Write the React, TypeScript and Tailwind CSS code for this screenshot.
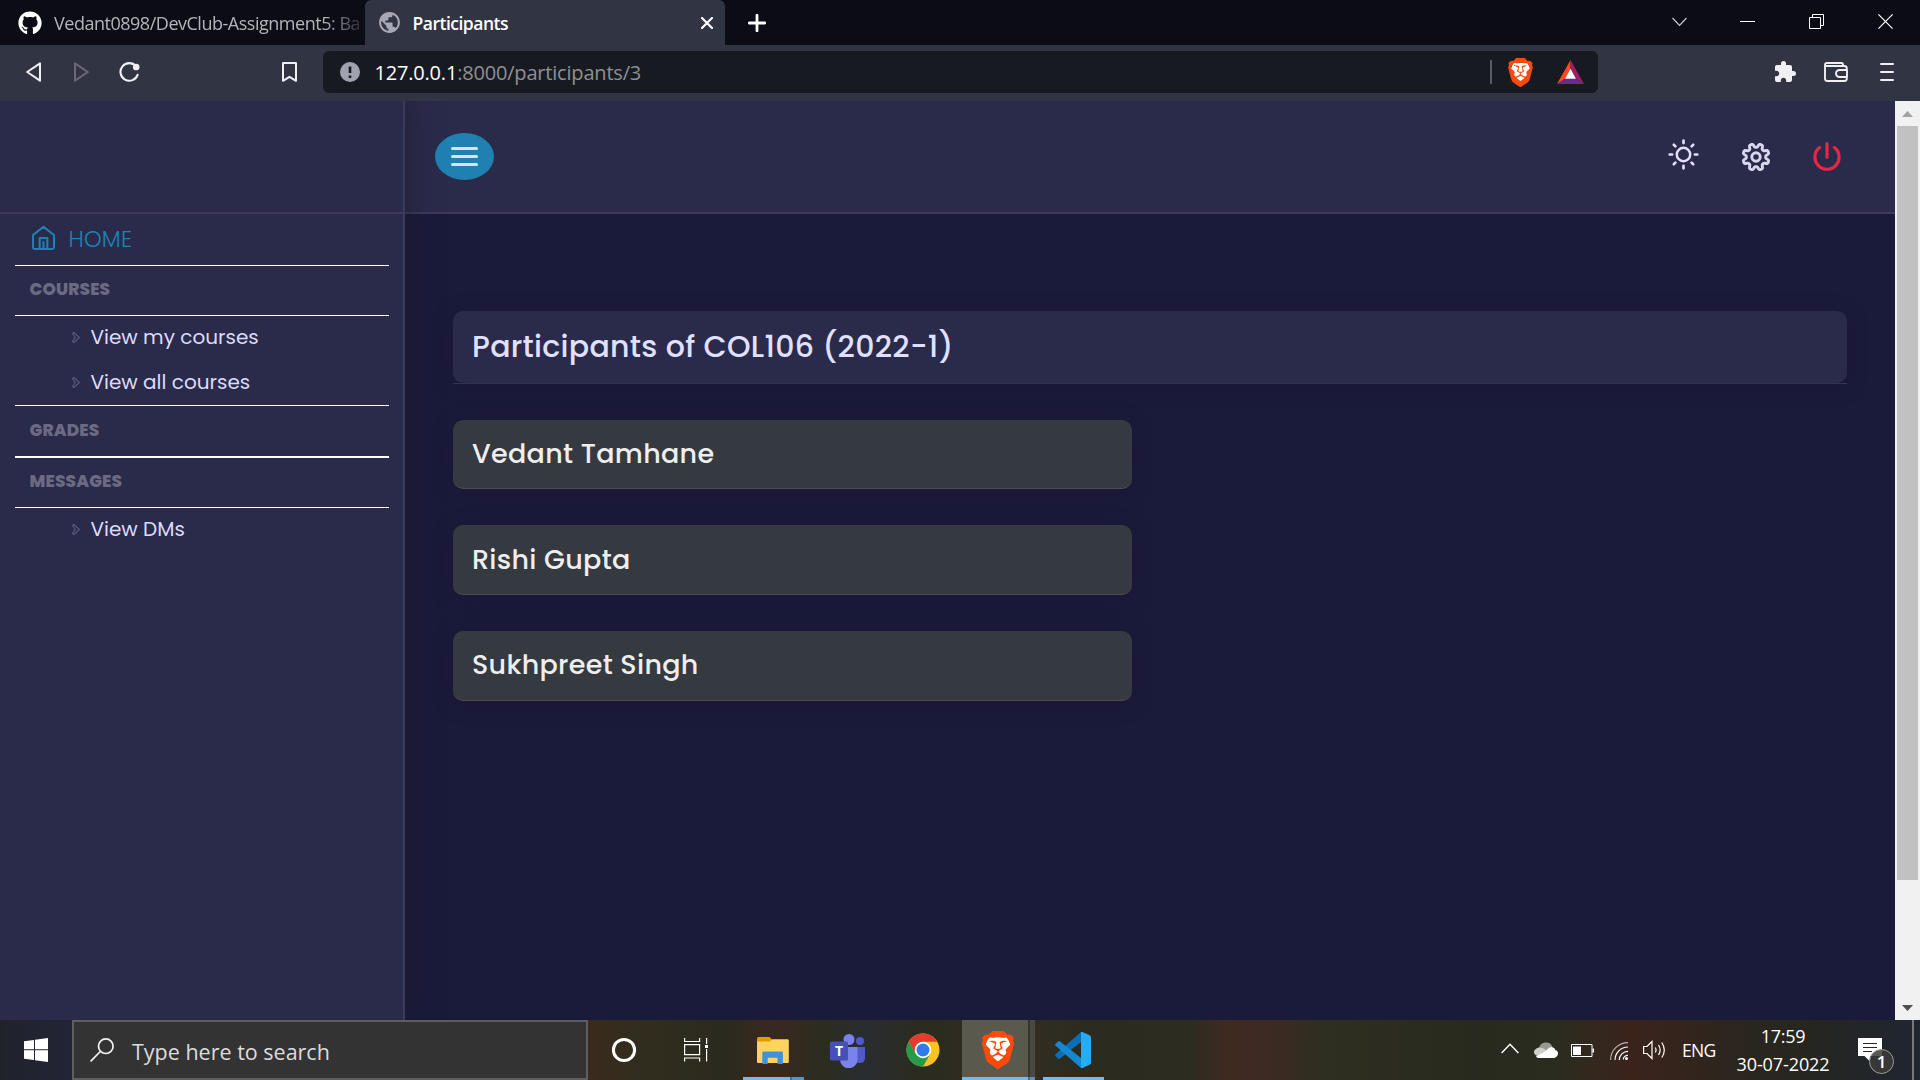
import React from "react";
import { FaGithub } from "react-icons/fa";
import { SiBrave } from "react-icons/si";
import { MdExtension, MdPublic } from "react-icons/md";

const poppins = "font-['Poppins',Inter,sans-serif]";
const segoe = "font-['Open_Sans','Noto_Sans',sans-serif]";

function Lion({ className }: { className: string }) {
  return (
    <svg viewBox="0 0 24 24" className={className} preserveAspectRatio="none">
      <path d="M6 4h12l2 5-3 8-5 5-5-5-3-8z" fill="#fff" />
      <SiBrave width="24" height="24" size={24} color="#fb4a0b" />
    </svg>
  );
}

function TabStrip() {
  return (
    <div className="flex h-[45px] bg-[#0b0c15]">
      <div className="flex w-[365px] items-center pl-[18px]">
        <FaGithub className="size-6 shrink-0 text-white" />
        <div className="ml-3 whitespace-nowrap text-[18px] leading-6 tracking-[-0.48px] text-[#b5b5b8] [mask-image:linear-gradient(90deg,#000_88%,transparent_103%)]">
          Vedant0898/DevClub-Assignment5: Ba
        </div>
      </div>
      <div className="flex w-[360px] items-center rounded-t-[6px] bg-[#313442] pl-[12px] pr-[12px]">
        <MdPublic className="size-[25px] text-[#a6a8b3]" />
        <span className="ml-[10.5px] text-[17.5px] leading-6 font-semibold tracking-[-0.5px] text-white">Participants</span>
        <svg viewBox="0 0 12 12" className="ml-auto size-3" stroke="#fff" strokeWidth="2.2" strokeLinecap="round">
          <path d="M1 1l10 10M11 1L1 11" />
        </svg>
      </div>
      <svg viewBox="0 0 18 18" className="mt-[13.5px] ml-[23px] size-[18px]" stroke="#fff" strokeWidth="2.8" strokeLinecap="round">
        <path d="M9 1.2v15.6M1.2 9h15.6" />
      </svg>
      <div className="ml-auto flex items-center pr-[27px] pb-[2px]">
        <svg viewBox="0 0 15 10" className="mr-[53px] h-[10px] w-[15px]" fill="none" stroke="#d0d0d4" strokeWidth="1.1">
          <path d="M.5 1l7 7.5 7-7.5" />
        </svg>
        <div className="mr-[54px] h-px w-[15px] bg-white" />
        <svg viewBox="0 0 15 15" className="mr-[54px] size-[15px]" fill="none" stroke="#fff">
          <path d="M.5 3.5h11v11H.5zM3.5 3.5v-3h11v11h-3" />
        </svg>
        <svg viewBox="0 0 15 15" className="size-[15px]" stroke="#fff" strokeWidth="1.2">
          <path d="M.4.4l14.2 14.2M14.6.4L.4 14.6" />
        </svg>
      </div>
    </div>
  );
}

function Toolbar() {
  return (
    <div className="flex h-14 bg-[#313442] pb-[2px]">
      <div className="flex w-[323px] items-center pl-[26px]">
        <svg viewBox="0 0 15 20" className="h-5 w-[15px]" fill="none" stroke="#f0f0f2" strokeWidth="2" strokeLinejoin="round">
          <path d="M14 1.3v17.4L1.2 10z" />
        </svg>
        <svg viewBox="0 0 15 20" className="ml-[33px] h-5 w-[15px]" fill="none" stroke="#676a76" strokeWidth="2" strokeLinejoin="round">
          <path d="M1 1.3v17.4L13.8 10z" />
        </svg>
        <svg viewBox="0 0 21 20" className="ml-[30px] h-5 w-[21px]" fill="none" stroke="#f0f0f2" strokeWidth="2.1" strokeLinecap="round">
          <path d="M17 4.2A8.8 8.8 0 1 0 18.6 12.8" />
          <circle cx="17.2" cy="5" r="2.3" fill="#f0f0f2" />
        </svg>
        <svg viewBox="0 0 15 20" className="ml-[142px] h-5 w-[15px]" fill="none" stroke="#f0f0f2" strokeWidth="2" strokeLinejoin="round">
          <path d="M1 1h13v17.8l-6.500-4-6.500 4z" />
        </svg>
      </div>
      <div className="mt-[6px] flex h-[42px] w-[1275px] items-center rounded-[6px] bg-[#181a21] pl-[17px]">
        <svg viewBox="0 0 20 20" className="size-5">
          <circle cx="10" cy="10" r="10" fill="#a0a3ae" />
          <path d="M10 4.500v6.500M10 13.600v2.400" stroke="#181a21" strokeWidth="2.600" />
        </svg>
        <div className="ml-[14.5px] pt-px text-[20px] leading-7 tracking-[-0.19px] text-[#8f9092]">
          <span className="text-white">127.0.0.1</span>:8000/participants/3
        </div>
        <div className="ml-auto h-6 w-[2px] bg-[#5b5d64]" />
        <Lion className="ml-[13.500px] size-[29px]" />
        <svg viewBox="0 0 27 24" className="mr-[14px] ml-[22.500px] h-6 w-[27px]">
          <path d="M13.500 0v9.500L8.500 18.500 0 24z" fill="#ff4724" />
          <path d="M13.500 0L27 24l-8.500-5.500-5-9z" fill="#9e1f63" />
          <path d="M0 24l8.500-5.500h10L27 24z" fill="#662d91" />
          <path d="M13.500 8.800l5.400 10H8.100z" fill="#fff" />
        </svg>
      </div>
      <div className="ml-auto flex items-center pr-[26px]">
        <MdExtension className="mr-[27px] size-6 text-[#f0f0f2]" />
        <svg viewBox="0 0 24 20" className="h-5 w-6" fill="none" stroke="#f0f0f2" strokeWidth="1.9" strokeLinejoin="round">
          <path d="M22.800 8V6.500a2.500 2.500 0 0 0-2.500-2.500H2M19 4V2.500Q19 1 17.500 1H3Q1 1 1 3v13.500Q1 19 3.500 19h17q2.300 0 2.300-2.500V15M23 8h-7.500a3.500 3.500 0 0 0 0 7H23z" />
        </svg>
        <div className="ml-8 flex w-[14px] flex-col gap-[6px]">
          <div className="h-[2px] rounded bg-[#f0f0f2]" />
          <div className="h-[2px] rounded bg-[#f0f0f2]" />
          <div className="h-[2px] rounded bg-[#f0f0f2]" />
        </div>
      </div>
    </div>
  );
}

function SubLink({ label }: { label: string }) {
  return (
    <a className="flex h-[45px] items-center pl-[57px]">
      <svg viewBox="0 0 8 11" className="mt-[-2px] h-[11px] w-2" fill="none" stroke="#55557a" strokeWidth="1.4" strokeLinejoin="round">
        <path d="M.6 1.500L2 .6l5.200 4.900L2 10.400.6 9.500 3 5.500z" />
      </svg>
      <span className="ml-[10.5px] pb-[4px] text-[20px] leading-7 text-[#dcdcfa]">{label}</span>
    </a>
  );
}

function Heading({ label, className }: { label: string; className: string }) {
  return <div className={`pl-[14.5px] text-[17px] leading-[46px] font-extrabold tracking-[0.1px] text-[#6a6a83] ${className}`}>{label}</div>;
}

function Sidebar() {
  return (
    <aside className="relative z-10 w-[405px] shrink-0 border-r-2 border-[#3c3b5a] bg-[#2a2a4a] shadow-[0_0_28px_rgba(30,26,40,0.65)]">
      <div className="h-[113px] border-b-2 border-[#3c3b5a]" />
      <nav className="ml-[15px] w-[374px]">
        <a className="flex h-[51px] items-center pl-[17px] text-[#2080b0]">
          <svg viewBox="0 0 24 26" className="mb-[4px] h-[26px] w-[23px]" fill="none" stroke="currentColor" strokeWidth="2.2" strokeLinejoin="round">
            <path d="M1 10L12 1.300 23 10v12.500q0 2-2 2H3q-2 0-2-2zM8 24.500V13h8v11.500M12 24.500v-8" />
          </svg>
          <span className="ml-[13.5px] pb-[2px] text-[22.5px] leading-8 font-light tracking-[0.15px]">HOME</span>
        </a>
        <div className="h-px bg-white" />
        <Heading label="COURSES" className="h-[49px]" />
        <div className="h-px bg-white" />
        <SubLink label="View my courses" />
        <SubLink label="View all courses" />
        <div className="-mt-px h-px bg-white" />
        <Heading label="GRADES" className="h-[50px] pt-px" />
        <div className="h-[2px] bg-white" />
        <Heading label="MESSAGES" className="h-[49px]" />
        <div className="h-px bg-white" />
        <SubLink label="View DMs" />
      </nav>
    </aside>
  );
}

const gear = (() => {
  const pts: string[] = [];
  const n = 144;
  for (let i = 0; i < n; i++) {
    const a = (i / n) * Math.PI * 2;
    const w = Math.tanh(2 * Math.cos(8 * a + Math.PI)) / Math.tanh(2);
    const r = 11.5 + 1.8 * w;
    pts.push(`${(15 + r * Math.cos(a)).toFixed(2)} ${(15 + r * Math.sin(a)).toFixed(2)}`);
  }
  return `M${pts.join("L")}Z`;
})();

function PageHeader() {
  return (
    <header className="flex h-[113px] items-start border-b-2 border-[#3c3b5a] bg-[#2a2a4a] pl-[30px]">
      <button className="mt-8 flex h-[47px] w-[59px] flex-col items-center justify-center gap-[5px] rounded-[50%] bg-[#2081b1]">
        <span className="h-[3px] w-[27px] rounded bg-[#dddff5]" />
        <span className="h-[3px] w-[27px] rounded bg-[#dddff5]" />
        <span className="h-[3px] w-[27px] rounded bg-[#dddff5]" />
      </button>
      <div className="mr-[54.5px] ml-auto flex items-start">
        <svg viewBox="0 0 31 31" className="mt-[38px] size-[31px]" fill="none" stroke="#e0e0fa" strokeWidth="2.700" strokeLinecap="round">
          <circle cx="15.500" cy="15.500" r="6.700" strokeWidth="2.500" />
          <path d="M15.500 1.700v2.400M15.500 26.900v2.400M1.700 15.500h2.400M26.900 15.500h2.400M5.800 5.800l1.600 1.600M23.600 23.600l1.600 1.600M5.800 25.200l1.600-1.600M23.600 7.400l1.600-1.600" />
        </svg>
        <svg viewBox="0 0 30 30" className="mt-[41px] ml-[41.5px] size-[30px]" fill="none" stroke="#d6d6ee" strokeWidth="2.900" strokeLinejoin="round">
          <path d={gear} />
          <circle cx="15" cy="15" r="4.200" />
        </svg>
        <svg viewBox="0 0 28 29" className="mt-[40.500px] ml-[42px] h-[29px] w-7" fill="none" stroke="#e82646" strokeWidth="3.200" strokeLinecap="round">
          <path d="M14 1.700v13.600M6.600 5.600a12.100 12.100 0 1 0 14.800 0" />
        </svg>
      </div>
    </header>
  );
}

const people = [
  { name: "Vedant Tamhane", box: "h-[69px] leading-[67px]" },
  { name: "Rishi Gupta", box: "mt-9 h-[70px] leading-[69px]" },
  { name: "Sukhpreet Singh", box: "mt-9 h-[70px] leading-[67px]" },
];

function Page() {
  return (
    <div className={`flex h-[919px] overflow-hidden ${poppins}`}>
      <Sidebar />
      <div className="flex-1 bg-[#1a1a3a]">
        <PageHeader />
        <main className="pt-[97px] pr-12 pl-[48px]">
          <div className="border-b border-[#3a3a58]">
            <h1 className="h-[72px] rounded-[10px] bg-[#2a2a4a] pl-[19px] text-[30px] leading-[71px] font-medium tracking-[0.3px] text-[#e0e0ff] shadow-[0_3px_20px_rgba(22,20,50,0.4)]">
              Participants of COL106 (2022-1)
            </h1>
          </div>
          <div className="mt-9 w-[679px]">
            {people.map((p) => (
              <div
                key={p.name}
                className={`rounded-[10px] border-b border-[#4a4d50] bg-[#343a40] pl-[19px] text-[27px] font-medium tracking-[0.3px] text-[#eee] shadow-[0_3px_20px_rgba(22,20,50,0.4)] ${p.box}`}
              >
                {p.name}
              </div>
            ))}
          </div>
        </main>
      </div>
      <div className="flex w-[25px] flex-col items-center bg-[#f1f1f1]">
        <svg viewBox="0 0 11 6" className="mt-[10px] h-[6px] w-[11px]" fill="#a3a3a3">
          <path d="M0 6L5.500 0 11 6z" />
        </svg>
        <div className="mt-[9px] h-[754px] w-[21px] bg-[#c1c1c1]" />
        <svg viewBox="0 0 11 6" className="mt-auto mb-[9px] h-[6px] w-[11px]" fill="#505050">
          <path d="M0 0l5.500 6L11 0z" />
        </svg>
      </div>
    </div>
  );
}

function Taskbar() {
  return (
    <div className="flex h-[60px] bg-[linear-gradient(90deg,#20222b_0%,#222537_4%,#3a2a1c_30.500%,#322d1e_33%,#2b2a1f_38%,#3a2820_40%,#2c2c20_43%,#292d30_45%,#2b2b1f_48%,#332d22_53%,#2b2b20_57%,#2c2c20_62%,#3f2a22_64%,#3d2a22_66%,#2e2e21_69%,#292a1f_77%,#2b2c20_81%,#3b231c_85%,#2c261e_90%,#26261f_94%,#20252f_99%)]">
      <div className="flex w-[72px] items-center pl-6">
        <svg viewBox="0 0 24 24" className="size-6" fill="#fff">
          <path d="M0 3.200L10 1.900V11.200H0zM11 1.700L24 0V11.200H11zM0 12.200H10V21.900L0 20.700zM11 12.200H24V24L11 22.200z" />
        </svg>
      </div>
      <div className="flex w-[516px] items-center border-2 border-[#5e5e5e] bg-[#333] pl-4">
        <svg viewBox="0 0 24 24" className="size-6" fill="none" stroke="#f4f4f4" strokeWidth="1.700">
          <circle cx="15.800" cy="8.200" r="7.300" />
          <path d="M10.300 13.500L.6 23.400" />
        </svg>
        <span className="ml-[18px] pt-[3px] text-[21.500px] leading-8 text-[#dcdcdc]">Type here to search</span>
      </div>
      <div className="flex flex-1">
        <svg viewBox="0 0 26 26" className="mt-[17px] ml-[23px] size-[26px]" fill="none" stroke="#fff" strokeWidth="3">
          <circle cx="13" cy="13" r="10.600" />
        </svg>
        <svg viewBox="0 0 24 24" className="mt-[18px] ml-[47px] size-6" fill="none" stroke="#fff" strokeWidth="1.200">
          <path d="M.6 0v3.500h15V0M.6 6.600h15v10H.6zM.6 23.500V20h15v3.500M22.600 0v6M22.600 11v12.500" />
          <path d="M21 7h3v3h-3z" fill="#fff" stroke="none" />
        </svg>
        <div className="ml-[35px] flex w-[61px] flex-col">
          <svg viewBox="0 0 32 28" className="mt-[17px] ml-[14px] h-7 w-8">
            <path d="M0 1.500Q0 0 1.500 0h11l2.500 2.500L12.500 6H0z" fill="#e09c00" />
            <path d="M0 4.500h12.500l2.500-2.200h15.500q1.300 0 1.300 1.300V25q0 1-1 1H1.200Q0 26 0 25z" fill="#ffd35e" />
            <path d="M5.300 27V15.700q0-1.200 1.200-1.200h18.200q1.200 0 1.200 1.200V27h-5.400v-6.300h-9.800V27z" fill="#3b93dc" />
          </svg>
          <div className="mt-auto flex h-[3px]">
            <div className="w-[47px] bg-[#76b9ed]" />
            <div className="w-[2px] bg-[#456f8f]" />
            <div className="flex-1 bg-[#5c94bf]" />
          </div>
        </div>
        <svg viewBox="0 0 36 34" className="mt-[14px] ml-[26px] h-[34px] w-9">
          <circle cx="30" cy="7" r="4" fill="#5059c9" />
          <path d="M25 13h10v11q0 5-5 5t-6-4z" fill="#5059c9" />
          <circle cx="19" cy="5.500" r="5.500" fill="#7b83eb" />
          <path d="M10 13h17.500v12a8.700 8.700 0 0 1-17.500 1z" fill="#7b83eb" />
          <rect y="7.500" width="18" height="19" rx="1.500" fill="#4650b5" />
          <text x="9" y="22" textAnchor="middle" fontSize="14" fontWeight="700" fill="#fff">T</text>
        </svg>
        <svg viewBox="0 0 34 34" className="mt-[13px] ml-10 size-[34px]">
          <circle cx="17" cy="17" r="16.500" fill="#fcc31e" />
          <path d="M2.700 8.750A16.500 16.500 0 0 1 31.300 8.750H17L9.800 21.100z" fill="#e33b2e" />
          <path d="M2.700 8.750A16.500 16.500 0 0 0 17 33.500L24.200 21.100H9.860z" fill="#259a48" />
          <circle cx="17" cy="17" r="8.300" fill="#fff" />
          <circle cx="17" cy="17" r="6.500" fill="#2f7bea" />
        </svg>
        <div className="ml-[22px] flex w-[73px]">
          <div className="flex w-[66px] flex-col items-center border-b-[3px] border-[#76b9ed] bg-[#5a594d]">
            <Lion className="mt-[11px] ml-[6px] size-[38px]" />
          </div>
          <div className="w-[2px] border-b-[3px] border-[#456f8f] bg-[#36362e]" />
          <div className="flex-1 border-b-[3px] border-[#5c94bf] bg-[#4a4940]" />
        </div>
        <div className="ml-2 flex w-[61px] flex-col border-b-[3px] border-[#76b9ed]">
          <svg viewBox="0 0 36 36" className="mt-3 ml-3 size-9">
            <path d="M26 0v10L5 26.500q-1 .8-2 0L.6 24.300q-1-1 0-2z" fill="#0c6fb5" />
            <path d="M26 36V26L5 9.500q-1-.8-2 0L.6 11.700q-1 1 0 2z" fill="#1488d0" />
            <path d="M26 0q1-.3 2 .2l7 3.400q1 .6 1 1.700v25.400q0 1.100-1 1.700l-7 3.400q-1 .5-2 .2z" fill="#29abf1" />
          </svg>
        </div>
      </div>
      <div className="flex w-[419px] text-white">
        <svg viewBox="0 0 18 11" className="mt-[23px] h-[11px] w-[18px]" fill="none" stroke="#fff" strokeWidth="1.400">
          <path d="M.6 10L9 1.200 17.400 10" />
        </svg>
        <svg viewBox="0 0 24 16" className="mt-[22px] ml-[15px] h-4 w-6">
          <path d="M5 7a7 7 0 0 1 13.500-2q-3 0-5 3L9 10z" fill="#999992" />
          <path d="M5 5.500q4-.5 7 2.500l-8 6Q0 13 0 10t5-4.500z" fill="#cfcfcc" />
          <path d="M2 14.500L13 7.700q2-3.200 5.500-2.500Q21 6 21.300 8q2.700.6 2.700 3.500T20.500 16H5q-2 0-3-1.500z" fill="#fff" />
        </svg>
        <svg viewBox="0 0 23 13" className="mt-6 ml-[13px] h-[13px] w-[23px]" fill="none" stroke="#fff">
          <path d="M.5.500h20.500v12H.5z" />
          <path d="M21.500 4.500h1.500v4h-1.500zM2 2.500h8v8.500H2z" fill="#fff" stroke="none" />
        </svg>
        <svg viewBox="0 0 18 18" className="mt-[22px] ml-4 size-[18px]" fill="none" stroke="#fff" strokeWidth="1.200">
          <path d="M.6 18A17.400 17.400 0 0 1 18 .6" stroke="#b5b2ae" />
          <path d="M5 18A13 13 0 0 1 18 5M9.300 18A8.700 8.700 0 0 1 18 9.300M13.300 17.500A4.500 4.500 0 0 1 18 13.300" />
          <circle cx="16.500" cy="16.500" r="1.500" fill="#fff" stroke="none" />
        </svg>
        <svg viewBox="0 0 23 20" className="mt-5 ml-[15px] h-5 w-[23px]" fill="none" stroke="#fff" strokeWidth="1.200">
          <path d="M.6 6.500H4L9 1.500v17L4 13.500H.6zM12.300 7.500q1.500 2.500 0 5M15.500 5q3.300 5 0 10M18.800 2.500q5 7.500 0 15" />
        </svg>
        <span className="mt-[17px] ml-[16px] w-[34px] text-[17.500px] leading-[26px] tracking-[-0.7px]">ENG</span>
        <div className="ml-[18px] w-[98px] text-center text-[18px] leading-[28px] whitespace-nowrap">
          <div className="pt-[2px] tracking-[-0.3px]">17:59</div>
          <div className="tracking-[-0.1px]">30-07-2022</div>
        </div>
        <svg viewBox="0 0 38 38" className="mt-[17px] ml-[26px] size-[38px]">
          <path d="M0 1h24v18H12v5.500L6.500 19H0z" fill="#fff" />
          <path d="M5 6.500h14M5 10.500h14M5 14.500h9" stroke="#26261f" strokeWidth="1.200" />
          <circle cx="23.500" cy="24.500" r="12" fill="#3b3b3a" fillOpacity=".85" stroke="#9a9a98" />
          <text x="23.500" y="31" textAnchor="middle" fontSize="17" fontWeight="600" fill="#fff">1</text>
        </svg>
        <div className="mr-[6px] ml-auto w-[2px] bg-[#76787c]" />
      </div>
    </div>
  );
}

export default function App() {
  return (
    <div className={`h-[1080px] w-[1920px] overflow-hidden ${segoe}`}>
      <TabStrip />
      <Toolbar />
      <Page />
      <Taskbar />
    </div>
  );
}
